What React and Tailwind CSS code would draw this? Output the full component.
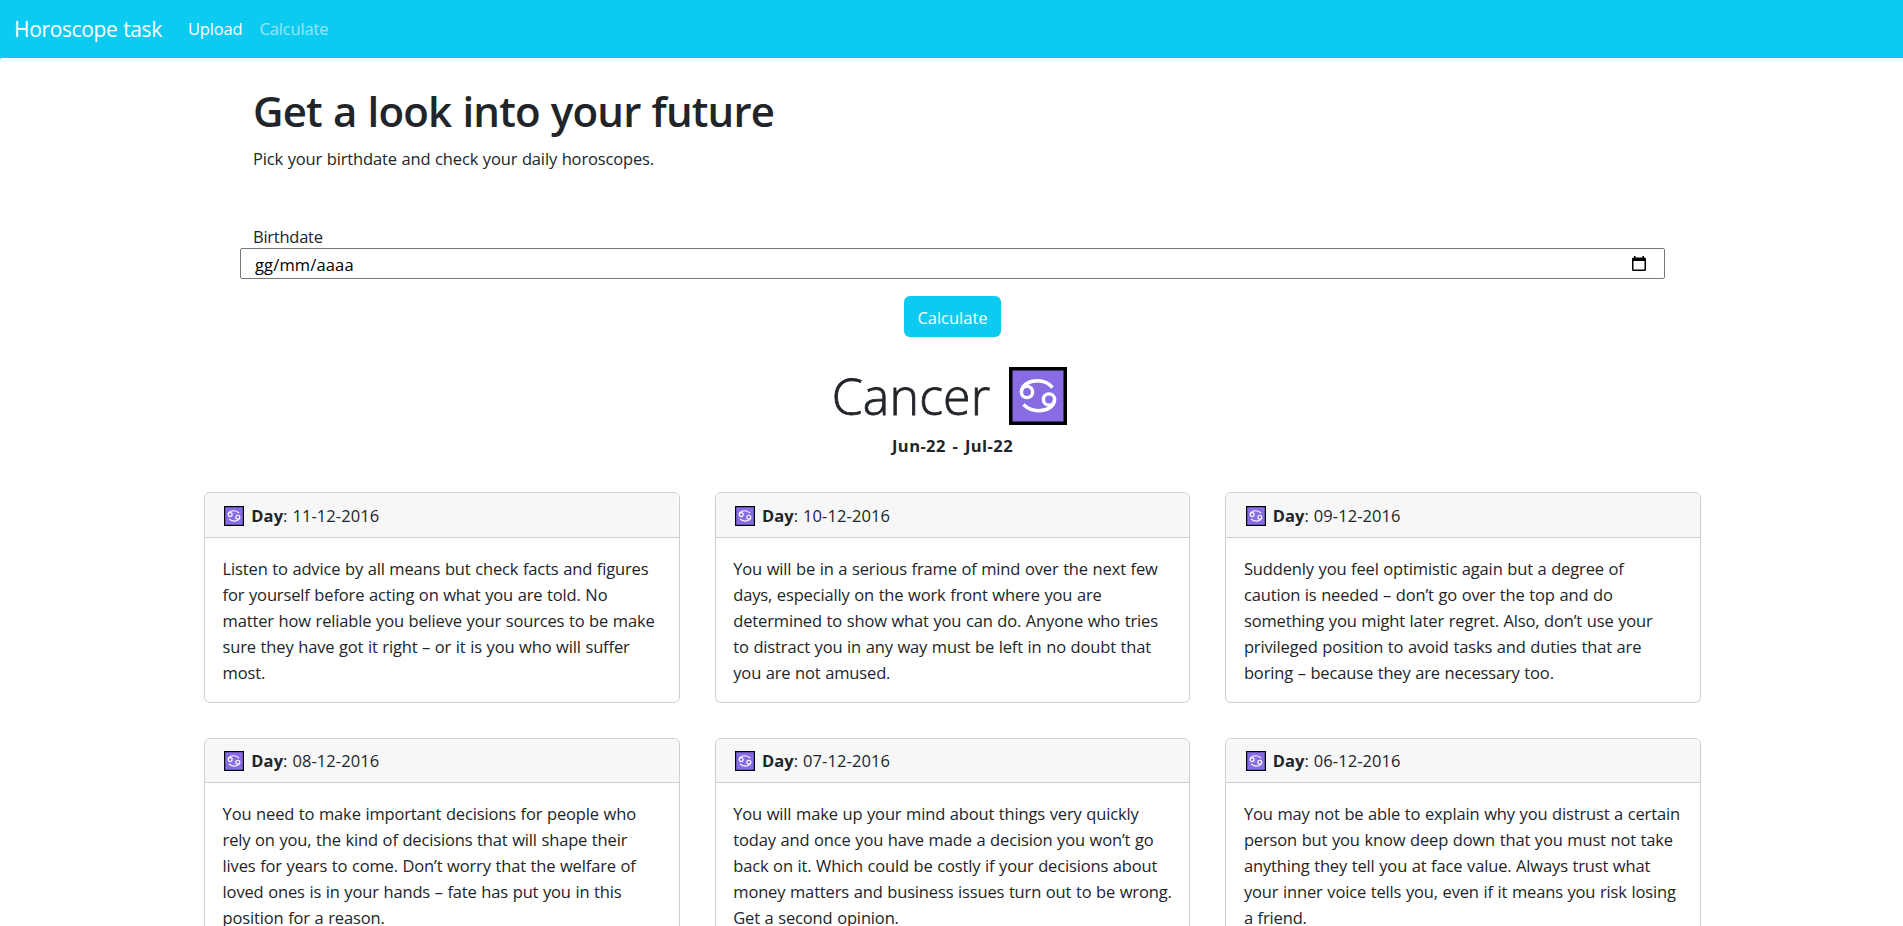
const horoscopes = [
  { day: "11-12-2016", lines: ["Listen to advice by all means but check facts and figures", "for yourself before acting on what you are told. No", "matter how reliable you believe your sources to be make", "sure they have got it right – or it is you who will suffer", "most."] },
  { day: "10-12-2016", lines: ["You will be in a serious frame of mind over the next few", "days, especially on the work front where you are", "determined to show what you can do. Anyone who tries", "to distract you in any way must be left in no doubt that", "you are not amused."] },
  { day: "09-12-2016", lines: ["Suddenly you feel optimistic again but a degree of", "caution is needed – don’t go over the top and do", "something you might later regret. Also, don’t use your", "privileged position to avoid tasks and duties that are", "boring – because they are necessary too."] },
  { day: "08-12-2016", lines: ["You need to make important decisions for people who", "rely on you, the kind of decisions that will shape their", "lives for years to come. Don’t worry that the welfare of", "loved ones is in your hands – fate has put you in this", "position for a reason."] },
  { day: "07-12-2016", lines: ["You will make up your mind about things very quickly", "today and once you have made a decision you won’t go", "back on it. Which could be costly if your decisions about", "money matters and business issues turn out to be wrong.", "Get a second opinion."] },
  { day: "06-12-2016", lines: ["You may not be able to explain why you distrust a certain", "person but you know deep down that you must not take", "anything they tell you at face value. Always trust what", "your inner voice tells you, even if it means you risk losing", "a friend."] },
];

function CancerIcon({ className }) {
  return (
    <svg viewBox="0 0 58 58" className={className} fill="none" aria-hidden="true">
      <rect width="58" height="58" fill="#000" />
      <rect x="3.5" y="3.5" width="51" height="51" fill="#886ce4" />
      <g stroke="#fff" strokeWidth="3.4">
        <circle cx="18" cy="25" r="5.6" />
        <circle cx="40" cy="32.5" r="5.6" />
        <path d="M12.4 25C12.4 18 20 13.8 28.5 13.8C34.500 13.800 39.500 16 43.500 20.500" />
        <path d="M45.600 32.500C45.600 39.500 38 43.700 29.500 43.700C23.500 43.700 18.500 41.500 14.500 37.500" />
      </g>
    </svg>
  );
}

function Card({ day, lines }) {
  return (
    <article className="overflow-hidden rounded-[6px] border border-[#cfcfcf] bg-white">
      <header className="flex h-[44.2px] items-center border-b border-[#cfcfcf] bg-[#f7f7f7] pt-[2px] pl-[19.3px]">
        <CancerIcon className="size-5 shrink-0" />
        <span className="ml-[7px] tracking-[0.08px] whitespace-nowrap">
          <b className="font-bold">Day</b>: {day}
        </span>
      </header>
      <p className="px-[17.6px] pt-[18px] pb-4">
        {lines.map((line) => (
          <span key={line} className="block whitespace-nowrap">{line} </span>
        ))}
      </p>
    </article>
  );
}

export default function App() {
  return (
    <div className="h-[926px] overflow-hidden bg-[#0dcaf0] font-['Open_Sans','Noto_Sans',sans-serif] text-[16.5px] leading-[26px] tracking-[-0.15px] text-[#212529] [word-spacing:0.5px]">
      <nav className="flex h-[58px] items-center bg-[#0dcaf0] pl-[14px] text-white">
        <a className="text-[21px] tracking-[-0.35px]">Horoscope task</a>
        <a className="ml-[26px]">Upload</a>
        <a className="ml-[17px] text-white/55">Calculate</a>
      </nav>
      <div className="h-[868px] overflow-hidden rounded-tl-[2px] bg-white">
        <section className="pt-[26px] pl-[253px]">
          <h1 className="text-[42px] leading-[53px] font-semibold tracking-[-0.82px] [word-spacing:1px]">Get a look into your future</h1>
          <p className="mt-[9px]">Pick your birthdate and check your daily horoscopes.</p>
        </section>
        <form className="mt-[52px] ml-[240px] flex w-[1425px] flex-col items-center">
          <label className="w-full pl-[13px] tracking-[-0.25px]">Birthdate</label>
          <div className="mt-[-2px] flex h-[31px] w-full items-center justify-between rounded-[2px] border border-[#767676] pr-[17px] pl-[14px] text-black">
            <span className="pt-0.5 tracking-[0.15px]">gg/mm/aaaa</span>
            <svg viewBox="0 0 16 16" className="size-4" aria-hidden="true">
              <path fillRule="evenodd" d="M3 0h1.500v1.500h7V0H13v1.500h.5q1.500 0 1.500 1.500v10.500q0 1.500-1.500 1.500h-11Q1 15 1 13.500V3Q1 1.500 2.500 1.500H3zM2.500 5v8.500h11V5z" />
            </svg>
          </div>
          <button type="button" className="mt-[17px] h-[41px] w-[97px] rounded-[6px] bg-[#0dcaf0] pt-0.5 tracking-[0px] text-white">Calculate</button>
        </form>
        <section className="ml-[2px] flex flex-col items-center">
          <div className="mt-[30px] mr-[6px] flex h-[58px] items-center">
            <h2 className="text-[50px] leading-[56px] font-light tracking-[0.15px] [-webkit-text-stroke:0.8px_#212529]">Cancer</h2>
            <CancerIcon className="ml-[19px] size-[58px]" />
          </div>
          <p className="mt-2 font-bold tracking-[0.42px] [word-spacing:2px]">Jun-22 - Jul-22</p>
        </section>
        <main className="mt-[33.4px] ml-[204px] grid w-[1497px] grid-cols-3 gap-x-[35px] gap-y-[35.2px]">
          {horoscopes.map((h) => (
            <Card key={h.day} day={h.day} lines={h.lines} />
          ))}
        </main>
      </div>
    </div>
  );
}
